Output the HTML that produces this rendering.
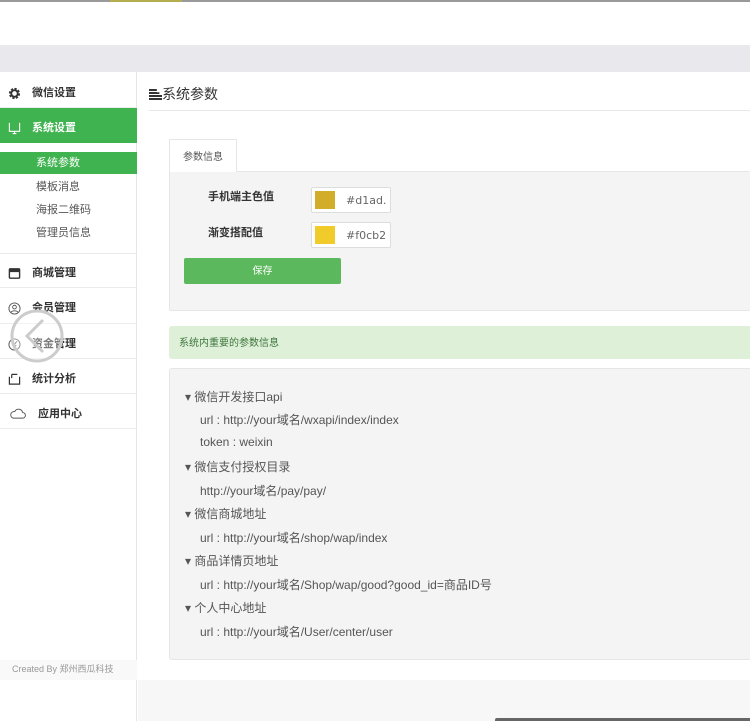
<!DOCTYPE html>
<html><head><meta charset="utf-8"><style>
*{margin:0;padding:0;box-sizing:border-box}
body{width:750px;height:721px;overflow:hidden;background:#fff;font-family:"Liberation Sans","Noto Sans CJK SC",sans-serif;position:relative;color:#333}
.a{position:absolute}
.side{left:0;top:72px;width:137px;height:649px;border-right:1px solid #e6e6e6;background:#fff}
.mi{position:absolute;left:0;width:137px;height:35px;font-size:11px;font-weight:bold;color:#333;border-bottom:1px solid #ececec;line-height:40px;padding-left:32px}
.ic{position:absolute;left:8px;top:14px;width:13px;height:13px}
.sub{position:absolute;left:0;width:137px;height:22px;line-height:22px;padding-left:36px;font-size:11px;color:#555}
.t{font-size:12px;color:#555;position:absolute;white-space:nowrap}
</style></head><body>
<div class="a" style="left:0;top:0;width:750px;height:2px;background:#9a9a9a"></div>
<div class="a" style="left:110px;top:0;width:72px;height:2px;background:#b5ae50"></div>
<div class="a" style="left:0;top:45px;width:750px;height:27px;background:#e9e9ed"></div>

<div class="a side">
  <div class="mi" style="top:0px;height:36px;line-height:42px">微信设置
    <svg class="ic" style="top:15px" viewBox="0 0 14 14"><circle cx="7" cy="7" r="4.5" fill="none" stroke="#333" stroke-width="3" stroke-dasharray="2.2 1.3"/><circle cx="7" cy="7" r="3.5" fill="none" stroke="#333" stroke-width="2"/></svg></div>
  <div class="mi" style="top:36px;height:35px;background:#3fb34f;color:#fff;border-bottom:none;line-height:40px">系统设置
    <svg class="ic" viewBox="0 0 14 14"><path d="M1.5 1v9h11V1M5 12.5h4M7 10v2.5" fill="none" stroke="#fff" stroke-width="1.2"/></svg></div>
  <div class="sub" style="top:80px;background:#3fb34f;color:#fff;line-height:23px">系统参数</div>
  <div class="sub" style="top:104px;line-height:23px">模板消息</div>
  <div class="sub" style="top:127px;line-height:23px">海报二维码</div>
  <div class="sub" style="top:150px;line-height:23px">管理员信息</div>
  <div class="mi" style="top:181px;border-top:1px solid #ececec;line-height:38px">商城管理
    <svg class="ic" style="top:13px" viewBox="0 0 14 14"><rect x="1.5" y="2" width="11" height="10" rx="1" fill="none" stroke="#333" stroke-width="1.5"/><rect x="1.5" y="2" width="11" height="3.5" fill="#333"/></svg></div>
  <div class="mi" style="top:217px;line-height:38px">会员管理
    <svg class="ic" style="top:13px" viewBox="0 0 14 14"><circle cx="7" cy="7" r="6" fill="none" stroke="#555" stroke-width="1"/><circle cx="7" cy="5.5" r="2" fill="none" stroke="#555"/><path d="M3.5 11c1-2 6-2 7 0" fill="none" stroke="#555"/></svg></div>
  <div class="mi" style="top:252px;line-height:40px">资金管理
    <svg class="ic" viewBox="0 0 14 14"><circle cx="7" cy="7" r="6" fill="none" stroke="#555"/><path d="M4.5 3.5L7 7l2.5-3.5M7 7v4M5 8h4" fill="none" stroke="#555"/></svg></div>
  <div class="mi" style="top:287px;line-height:40px">统计分析
    <svg class="ic" viewBox="0 0 14 14"><path d="M1.5 4v8h11V4M4 1.5h6M4 1.5v4" fill="none" stroke="#333" stroke-width="1.3"/></svg></div>
  <div class="mi" style="top:322px;padding-left:38px;line-height:40px">应用中心
    <svg class="ic" style="width:20px;top:13px" viewBox="0 0 20 14"><path d="M5 12h10a3 3 0 0 0 0-6 4.5 4.5 0 0 0-8.5-1A3.5 3.5 0 0 0 5 12z" fill="none" stroke="#555"/></svg></div>
  <div class="a" style="left:0;top:588px;width:137px;height:20px;background:#f9f9f9"></div>
  <div class="a" style="left:12px;top:590px;font-size:9px;color:#999">Created By 郑州西瓜科技</div>
</div>
<svg class="a" style="left:9px;top:308px" width="56" height="56" viewBox="0 0 56 56"><circle cx="28" cy="28" r="25" fill="rgba(255,255,255,0.35)" stroke="#ccc" stroke-width="3"/><path d="M34 12L18 28l16 16" fill="none" stroke="#ccc" stroke-width="3"/></svg>

<div class="a" style="left:138px;top:72px;width:612px;height:608px;background:#fff"></div>
<div class="a" style="left:149px;top:84px;font-size:14px;color:#333">
<span style="display:inline-block;vertical-align:-1px;width:13px;height:11px;background:linear-gradient(#333 0 2px,transparent 2px 3px,#333 3px 5px,transparent 5px 6px,#333 6px 8px,transparent 8px 9px,#333 9px 11px);clip-path:polygon(0 0,60% 0,60% 30%,80% 30%,80% 55%,100% 55%,100% 100%,0 100%)"></span>系统参数</div>
<div class="a" style="left:149px;top:110px;width:601px;height:1px;background:#e8e8e8"></div>

<div class="a" style="left:169px;top:139px;width:68px;height:33px;background:#fff;border:1px solid #e6e6e6;border-bottom:none;font-size:10px;color:#555;text-align:center;line-height:36px;z-index:2">参数信息</div>
<div class="a" style="left:169px;top:171px;width:581px;height:140px;background:#f4f4f4;border:1px solid #e6e6e6;border-right:none;border-radius:2px"></div>
<div class="a" style="left:208px;top:188px;font-size:11px;font-weight:bold;color:#333">手机端主色值</div>
<div class="a" style="left:208px;top:224px;font-size:11px;font-weight:bold;color:#333">渐变搭配值</div>
<div class="a" style="left:311px;top:187px;width:80px;height:26px;background:#fff;border:1px solid #ddd;border-radius:2px"><div class="a" style="left:3px;top:3px;width:20px;height:18px;background:#d1ad2a"></div><span class="a" style="left:34px;top:6px;font-size:11px;color:#666;font-family:'DejaVu Sans',sans-serif">#d1ad.</span></div>
<div class="a" style="left:311px;top:222px;width:80px;height:26px;background:#fff;border:1px solid #ddd;border-radius:2px"><div class="a" style="left:3px;top:3px;width:20px;height:18px;background:#f0cb2a"></div><span class="a" style="left:34px;top:6px;font-size:11px;color:#666;font-family:'DejaVu Sans',sans-serif">#f0cb2</span></div>
<div class="a" style="left:184px;top:258px;width:157px;height:26px;background:#5cb85c;border-radius:2px;color:#fff;font-size:10px;text-align:center;line-height:28px">保存</div>

<div class="a" style="left:169px;top:326px;width:581px;height:33px;background:#dff0d8;border-radius:3px 0 0 3px;font-size:10px;color:#3c763d;line-height:35px;padding-left:10px">系统内重要的参数信息</div>

<div class="a" style="left:169px;top:368px;width:581px;height:292px;background:#f4f4f4;border:1px solid #e6e6e6;border-right:none;border-radius:3px 0 0 3px"></div>
<div class="t" style="left:185px;top:388px">▾ 微信开发接口api</div>
<div class="t" style="left:200px;top:411px">url : http://your域名/wxapi/index/index</div>
<div class="t" style="left:200px;top:435px">token : weixin</div>
<div class="t" style="left:185px;top:458px">▾ 微信支付授权目录</div>
<div class="t" style="left:200px;top:482px">http://your域名/pay/pay/</div>
<div class="t" style="left:185px;top:505px">▾ 微信商城地址</div>
<div class="t" style="left:200px;top:529px">url : http://your域名/shop/wap/index</div>
<div class="t" style="left:185px;top:552px">▾ 商品详情页地址</div>
<div class="t" style="left:200px;top:576px">url : http://your域名/Shop/wap/good?good_id=商品ID号</div>
<div class="t" style="left:185px;top:599px">▾ 个人中心地址</div>
<div class="t" style="left:200px;top:623px">url : http://your域名/User/center/user</div>

<div class="a" style="left:138px;top:680px;width:612px;height:41px;background:#f7f7f7"></div>
<div class="a" style="left:495px;top:718px;width:255px;height:3px;background:#666;border-radius:2px 0 0 0"></div>
</body></html>
